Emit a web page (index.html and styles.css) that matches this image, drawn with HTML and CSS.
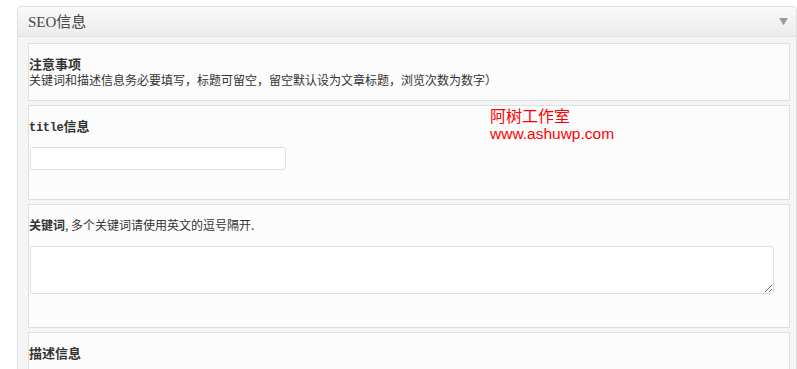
FILE: index.html
```html
<!DOCTYPE html>
<html lang="zh-CN">
<head>
    <meta charset="UTF-8">
    <title>SEO信息</title>
    <link rel="stylesheet" href="styles.css">
</head>
<body>

<div class="postbox">
    <div class="postbox-header">
        <h3>SEO信息</h3>
        <span class="toggle-arrow">&#9660;</span>
    </div>
    <div class="inside">
        <div class="field notice">
            <h4>注意事项</h4>
            <p>关键词和描述信息务必要填写，标题可留空，留空默认设为文章标题，浏览次数为数字）</p>
        </div>

        <div class="field field-title">
            <h4><span class="mono">title</span>信息</h4>
            <input type="text" class="text-input">
            <div class="watermark">
                <div class="name">阿树工作室</div>
                <div class="url">www.ashuwp.com</div>
            </div>
        </div>

        <div class="field field-keywords">
            <p><strong>关键词</strong>, 多个关键词请使用英文的逗号隔开.</p>
            <textarea class="text-area"></textarea>
        </div>

        <div class="field">
            <h4>描述信息</h4>
        </div>
    </div>
</div>

</body>
</html>
```

FILE: styles.css
```css
body {
    margin: 0;
    padding: 0;
    background-color: #fff;
    color: #333;
    font-family: "Noto Sans CJK SC", sans-serif;
    overflow: hidden;
}
.postbox {
    width: 780px;
    margin: 6px 0 0 17px;
    border: 1px solid #dfdfdf;
    border-radius: 4px 4px 0 0;
    background-color: #f5f5f5;
    box-sizing: border-box;
}
.postbox-header {
    display: flex;
    align-items: center;
    justify-content: space-between;
    height: 29px;
    padding: 0 8px 0 10px;
    border-bottom: 1px solid #dfdfdf;
    background: linear-gradient(to bottom, #f9f9f9, #ececec);
    border-radius: 4px 4px 0 0;
}
.postbox-header h3 {
    margin: 0;
    font-family: "Liberation Serif", "Noto Sans CJK SC", serif;
    font-size: 15px;
    font-weight: normal;
    color: #464646;
    line-height: 20px;
}
.toggle-arrow {
    font-size: 9px;
    color: #999;
    line-height: 10px;
}
.inside {
    padding: 6px 6px 0 10px;
    display: flex;
    flex-direction: column;
    gap: 4px;
}
.field {
    position: relative;
    background-color: #fcfcfc;
    border: 1px solid #dfdfdf;
    padding: 12px 0 12px 0;
}
.field h4 {
    margin: 0;
    font-size: 13px;
    font-weight: bold;
    line-height: 16px;
    height: 16px;
}
.field p {
    margin: 0;
    font-size: 12px;
    line-height: 16px;
}
.mono {
    font-family: "Liberation Mono", monospace;
    font-size: 12px;
    line-height: 10px;
    letter-spacing: -0.3px;
}
.field-title {
    padding-bottom: 29px;
}
.field-keywords {
    padding-bottom: 33px;
}
.text-input {
    display: block;
    width: 256px;
    height: 23px;
    margin: 13px 0 0 1px;
    border: 1px solid #dfdfdf;
    border-radius: 3px;
    background-color: #fff;
    box-sizing: border-box;
}
.text-area {
    display: block;
    width: 744px;
    height: 48px;
    margin: 13px 0 0 1px;
    border: 1px solid #dfdfdf;
    border-radius: 3px;
    background-color: #fff;
    box-sizing: border-box;
}
.watermark {
    position: absolute;
    left: 461px;
    top: 0;
    color: #f00;
}
.watermark .name {
    font-size: 16px;
    line-height: 19px;
}
.watermark .url {
    font-family: "Liberation Sans", sans-serif;
    font-size: 15.5px;
    line-height: 17px;
}
```
